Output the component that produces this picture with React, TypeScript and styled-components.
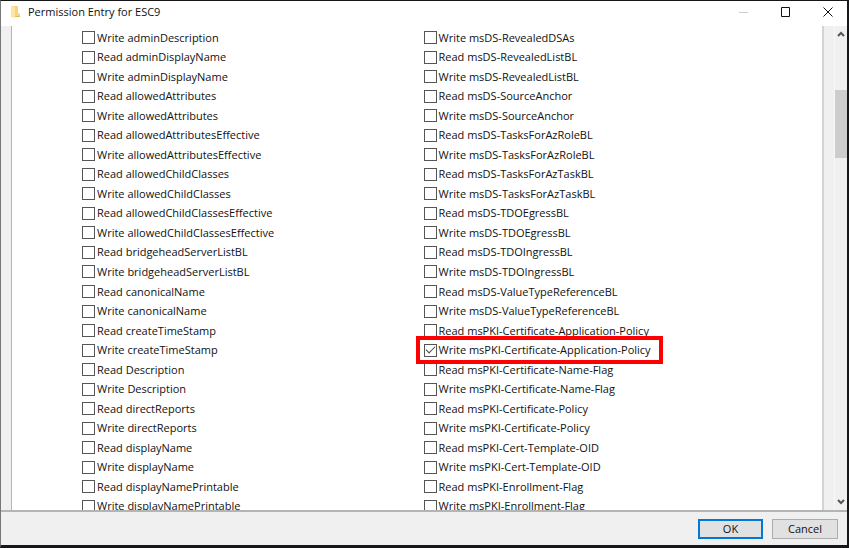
import React from "react";
import styled, { createGlobalStyle, css } from "styled-components";

const GlobalStyle = createGlobalStyle`
  *, *::before, *::after { box-sizing: border-box; }
  body {
    margin: 0;
    background: #fff;
    color: #111;
    font-family: "Open Sans", "Noto Sans", sans-serif;
    font-size: 11px;
  }
`;

const Window = styled.div`
  display: flex;
  flex-direction: column;
  height: 100vh;
  background: #fff;
  border: solid #17171a;
  border-width: 1px 2px 3px 1px;
  border-left-color: #777;
`;

const TitleBar = styled.header`
  display: flex;
  flex: none;
  align-items: center;
  height: 25px;
  padding: 0 4px 4px 9px;
`;

const Title = styled.h1`
  flex: 1;
  margin: 0 0 0 7px;
  font-size: 11px;
  font-weight: 400;
  line-height: 20px;
`;

const WindowButton = styled.button`
  display: grid;
  place-items: center;
  width: 42px;
  height: 20px;
  padding: 0;
  border: 0;
  background: transparent;
  color: #111;
  &:last-child { width: 30px; margin-left: 6px; }
  &:disabled { color: #ccc; }
`;

const Body = styled.main`
  display: flex;
  flex: 1;
  min-height: 0;
  padding-left: 10px;
  background: #f0f0f0;
`;

const Panel = styled.section`
  flex: 1;
  overflow: hidden;
  padding: 2px 0 0 70px;
  background: #fff;
  border-left: 1px solid #b4b4b4;
  border-right: 2px solid #d4d4d4;
`;

const Permissions = styled.div`
  display: grid;
  grid-auto-flow: column;
  grid-template-columns: 6fr 7fr;
  grid-template-rows: repeat(25, 1fr);
  height: 488px;
`;

const Permission = styled.label<{ $highlighted: boolean }>`
  position: relative;
  display: flex;
  gap: 2px;
  align-items: center;
  justify-self: start;
  min-height: 0;
  line-height: 18px;
  white-space: nowrap;
  ${({ $highlighted }) =>
    $highlighted &&
    css`
      z-index: 1;
      &::after {
        content: "";
        position: absolute;
        inset: -4px -12px -4px -8px;
        border: 4px solid #fe0000;
        pointer-events: none;
      }
    `}
`;

const CheckBox = styled.input`
  appearance: none;
  flex: none;
  width: 13px;
  height: 13px;
  margin: 0;
  border: 1px solid #555;
  background: #fff;
  display: grid;
  place-items: center;
  &:checked::after {
    content: "";
    width: 9px;
    height: 5px;
    margin-bottom: 3px;
    border: solid #444;
    border-width: 0 0 1px 1px;
    transform: rotate(-45deg);
  }
`;

const ScrollBar = styled.div`
  display: flex;
  flex-direction: column;
  width: 13px;
  margin-left: 10px;
  border-left: 1px solid #f8f8f8;
`;

const ScrollButton = styled.button`
  display: grid;
  place-items: center;
  flex: none;
  height: 16px;
  padding: 0;
  border: 0;
  background: transparent;
  color: #555;
`;

const Track = styled.div`
  display: grid;
  flex: 1;
  grid-template-rows: 48fr 68fr 336fr;
`;

const Thumb = styled.div`
  grid-row: 2;
  background: #cdcdcd;
`;

const Footer = styled.footer`
  display: flex;
  flex: none;
  gap: 9px;
  align-items: center;
  justify-content: flex-end;
  height: 35px;
  padding: 0 9px 0 0;
  border-top: 2px solid #b4b4b4;
  background: #f0f0f0;
`;

const DialogButton = styled.button<{ $primary?: boolean }>`
  width: ${({ $primary }) => ($primary ? "65px" : "66px")};
  height: 20px;
  padding: 0;
  border: ${({ $primary }) => ($primary ? "2px solid #0078d7" : "1px solid #adadad")};
  background: #e1e1e1;
  color: #111;
  font: inherit;
  line-height: 16px;
`;

const readWrite = (names: string[]) => names.flatMap((name) => [`Read ${name}`, `Write ${name}`]);

const permissions = [
  "Write adminDescription",
  ...readWrite([
    "adminDisplayName",
    "allowedAttributes",
    "allowedAttributesEffective",
    "allowedChildClasses",
    "allowedChildClassesEffective",
    "bridgeheadServerListBL",
    "canonicalName",
    "createTimeStamp",
    "Description",
    "directReports",
    "displayName",
    "displayNamePrintable",
  ]),
  "Write msDS-RevealedDSAs",
  ...readWrite([
    "msDS-RevealedListBL",
    "msDS-SourceAnchor",
    "msDS-TasksForAzRoleBL",
    "msDS-TasksForAzTaskBL",
    "msDS-TDOEgressBL",
    "msDS-TDOIngressBL",
    "msDS-ValueTypeReferenceBL",
    "msPKI-Certificate-Application-Policy",
    "msPKI-Certificate-Name-Flag",
    "msPKI-Certificate-Policy",
    "msPKI-Cert-Template-OID",
    "msPKI-Enrollment-Flag",
  ]),
];

const granted = "Write msPKI-Certificate-Application-Policy";

function FolderIcon() {
  return (
    <svg width="11" height="12" viewBox="0 0 11 12" aria-hidden="true">
      <path d="M2 0h6v7l2 1v3H2z" fill="#f5d583" />
      <path d="M1 0l4 1v11l-4-1z" fill="#ffe6a0" />
      <path d="M5 10h5v1H5z" fill="#e5bb4f" />
    </svg>
  );
}

function Chevron({ down = false }: { down?: boolean }) {
  return (
    <svg width="8" height="6" viewBox="0 0 8 6" aria-hidden="true">
      <path d={down ? "M1 1l3 3 3-3" : "M1 5l3-3 3 3"} fill="none" stroke="currentColor" strokeWidth="2" />
    </svg>
  );
}

export default function App() {
  return (
    <>
      <GlobalStyle />
      <Window>
        <TitleBar>
          <FolderIcon />
          <Title>Permission Entry for ESC9</Title>
          <WindowButton aria-label="Minimize" disabled>
            <svg width="10" height="10"><path d="M0 5.5h9" stroke="currentColor" /></svg>
          </WindowButton>
          <WindowButton aria-label="Maximize">
            <svg width="10" height="10"><path d="M.5.5h8v9h-8z" fill="none" stroke="currentColor" /></svg>
          </WindowButton>
          <WindowButton aria-label="Close">
            <svg width="10" height="10"><path d="M.5.5l9 9m0-9l-9 9" stroke="currentColor" /></svg>
          </WindowButton>
        </TitleBar>
        <Body>
          <Panel aria-label="Permissions">
            <Permissions>
              {permissions.map((name) => (
                <Permission key={name} $highlighted={name === granted}>
                  <CheckBox type="checkbox" defaultChecked={name === granted} />
                  {name}
                </Permission>
              ))}
            </Permissions>
          </Panel>
          <ScrollBar>
            <ScrollButton aria-label="Scroll up"><Chevron /></ScrollButton>
            <Track><Thumb /></Track>
            <ScrollButton aria-label="Scroll down"><Chevron down /></ScrollButton>
          </ScrollBar>
        </Body>
        <Footer>
          <DialogButton $primary>OK</DialogButton>
          <DialogButton>Cancel</DialogButton>
        </Footer>
      </Window>
    </>
  );
}
